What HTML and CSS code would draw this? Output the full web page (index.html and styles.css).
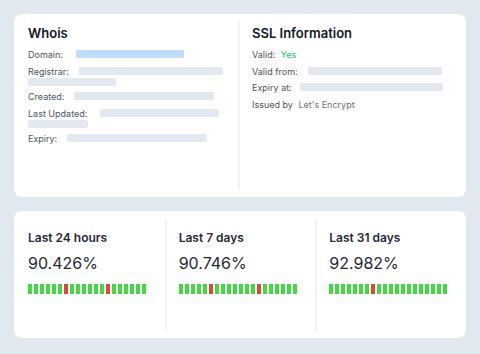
FILE: index.html
```html
<!DOCTYPE html>
<html>

<head>
    <title>Domain status</title>
    <meta charset="utf-8">
    <meta name="viewport" content="width=device-width, initial-scale=1">
    <link rel="stylesheet" href="styles.css">
</head>

<body>
    <div class="card info">
        <section class="panel">
            <h2 class="panel-title">Whois</h2>
            <div class="row">Domain:<span class="skel blue domain"></span></div>
            <div class="row">Registrar:<span class="skel registrar"></span><span class="skel wrap registrar-2"></span></div>
            <div class="row">Created:<span class="skel created"></span></div>
            <div class="row">Last Updated:<span class="skel updated"></span><span class="skel wrap updated-2"></span></div>
            <div class="row">Expiry:<span class="skel expiry"></span></div>
        </section>
        <section class="panel">
            <h2 class="panel-title">SSL Information</h2>
            <div class="row">Valid: <span class="value ok">Yes</span></div>
            <div class="row">Valid from:<span class="skel valid-from"></span></div>
            <div class="row">Expiry at:<span class="skel expiry-at"></span></div>
            <div class="row">Issued by <span class="value">Let's Encrypt</span></div>
        </section>
    </div>

    <div class="card uptime">
        <section class="period">
            <div class="period-title">Last 24 hours</div>
            <div class="period-value">90.426%</div>
            <div class="beats">
                <span class="up"></span><span class="up"></span><span class="up"></span><span class="up"></span><span class="up"></span><span class="up"></span><span class="down"></span><span class="up"></span><span class="up"></span><span class="up"></span>
                <span class="up"></span><span class="up"></span><span class="up"></span><span class="down"></span><span class="up"></span><span class="up"></span><span class="up"></span><span class="up"></span><span class="up"></span><span class="up"></span>
            </div>
        </section>
        <section class="period">
            <div class="period-title">Last 7 days</div>
            <div class="period-value">90.746%</div>
            <div class="beats">
                <span class="up"></span><span class="up"></span><span class="up"></span><span class="up"></span><span class="up"></span><span class="down"></span><span class="up"></span><span class="up"></span><span class="up"></span><span class="up"></span>
                <span class="up"></span><span class="up"></span><span class="up"></span><span class="down"></span><span class="up"></span><span class="up"></span><span class="up"></span><span class="up"></span><span class="up"></span><span class="up"></span>
            </div>
        </section>
        <section class="period">
            <div class="period-title">Last 31 days</div>
            <div class="period-value">92.982%</div>
            <div class="beats">
                <span class="up"></span><span class="up"></span><span class="up"></span><span class="up"></span><span class="up"></span><span class="up"></span><span class="up"></span><span class="down"></span><span class="up"></span><span class="up"></span>
                <span class="up"></span><span class="up"></span><span class="up"></span><span class="up"></span><span class="up"></span><span class="up"></span><span class="up"></span><span class="up"></span><span class="up"></span><span class="up"></span>
            </div>
        </section>
    </div>
</body>

</html>
```

FILE: styles.css
```css
body {
    margin: 0;
    padding: 14px;
    background-color: #e2e8f0;
    font-family: "Inter", "Noto Sans", sans-serif;
    color: #111827;
}

.card {
    background-color: #FFFFFF;
    border-radius: 8px;
    padding: 8px 0;
    margin-bottom: 14px;
}

/* whois + ssl */
.info {
    display: grid;
    grid-template-columns: 224px 1fr;
    min-height: 167px;
}

.panel {
    padding: 3px 14px;
}

.panel + .panel {
    border-left: 2px solid #f1f2f4;
    padding-left: 12px;
}

.panel-title {
    margin: 0 0 7px;
    font-size: 13px;
    line-height: 17px;
    font-weight: 600;
}

.row {
    font-size: 9px;
    line-height: 11px;
    color: #4b5563;
    margin-bottom: 5.5px;
}

.value {
    margin-left: 3px;
    color: #6b7280;
}

.value.ok {
    color: #22c55e;
}

.skel {
    display: inline-block;
    vertical-align: top;
    height: 8px;
    margin-top: 1px;
    margin-left: 10px;
    border-radius: 2px;
    background-color: #e2e8f0;
}

.skel.blue {
    background-color: #bfdbfe;
}

.skel.wrap {
    display: block;
    margin-left: 0;
}

.domain { width: 108px; margin-left: 13px; }
.registrar { width: 144px; }
.registrar-2 { width: 88px; }
.created { width: 140px; }
.updated { width: 119px; margin-left: 13px; }
.updated-2 { width: 60px; }
.expiry { width: 140px; }
.valid-from { width: 134px; }
.expiry-at { width: 143px; margin-left: 8px; }

/* uptime */
.uptime {
    display: grid;
    grid-template-columns: repeat(3, 1fr);
    min-height: 111px;
}

.period {
    padding: 11px 14px;
}

.period + .period {
    border-left: 2px solid #f1f2f4;
    padding-left: 12px;
}

.period-title {
    font-size: 12px;
    line-height: 15px;
    font-weight: 600;
    color: #1f2937;
}

.period-value {
    margin-top: 8px;
    font-size: 16px;
    line-height: 20px;
    color: #1f2937;
}

.beats {
    display: flex;
    gap: 2px;
    margin-top: 10.5px;
}

.beats span {
    width: 4px;
    height: 10px;
    background-color: #44d944;
}

.beats span.down {
    background-color: #e5443d;
}
```
